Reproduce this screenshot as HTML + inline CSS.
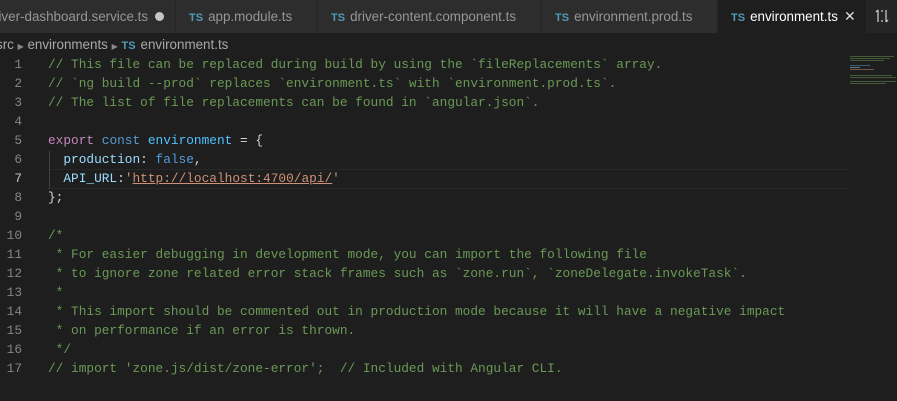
<!DOCTYPE html>
<html><head><style>
body{margin:0;width:897px;height:401px;background:#1e1e1e;overflow:hidden;position:relative;font-family:"Liberation Sans",sans-serif}
.tabs{position:absolute;left:0;top:0;width:897px;height:33px;background:#252526}
.tab{position:absolute;top:0;height:33px;background:#2d2d2d;color:#969696;font-size:13.4px;line-height:33px;white-space:nowrap;overflow:hidden;border-right:1px solid #252526;box-sizing:border-box}
.ts{color:#519aba;font-weight:bold;font-size:11px;margin-right:5px}
.bc{position:absolute;top:34px;left:0;height:22px;line-height:22px;color:#a9a9a9;font-size:13.4px;white-space:nowrap}
.code{position:absolute;left:0;top:57px;font-family:"Liberation Mono",monospace;font-size:12.8px}
.ln{position:absolute;left:0;width:22px;text-align:right;color:#858585}
.l{position:absolute;left:48px;white-space:pre;color:#d4d4d4}
.c{color:#6a9955}.k{color:#c586c0}.b{color:#569cd6}.v{color:#9cdcfe}.s{color:#ce9178}.f{color:#4fc1ff}
</style></head><body>
<div class="tabs">
<div class="tab" style="left:0;width:176px;padding-left:0"><span style="margin-left:-6px">river-dashboard.service.ts</span><span style="position:absolute;left:155px;top:12px;width:9px;height:9px;border-radius:50%;background:#c5c5c5"></span></div>
<div class="tab" style="left:176px;width:142px;padding-left:13px"><span class="ts">TS</span>app.module.ts</div>
<div class="tab" style="left:318px;width:224px;padding-left:13px"><span class="ts">TS</span>driver-content.component.ts</div>
<div class="tab" style="left:542px;width:176px;padding-left:13px"><span class="ts">TS</span>environment.prod.ts</div>
<div class="tab" style="left:718px;width:149px;padding-left:13px;background:#1e1e1e;color:#fff"><span class="ts">TS</span>environment.ts<span style="position:absolute;left:126px;color:#ddd;font-size:14px">✕</span></div>
<svg style="position:absolute;left:874px;top:8px" width="16" height="16" viewBox="0 0 16 16" fill="none" stroke="#c5c5c5" stroke-width="1.3"><path d="M4 2v12M4 2l-2 2M12 14V2M12 14l2-2M7 3h2M7 13h2"/></svg>
</div>
<div class="bc"><span style="margin-left:-4px">src</span> <span style="font-size:8px;color:#888">▶</span> environments <span style="font-size:8px;color:#888">▶</span> <span class="ts">TS</span>environment.ts</div>
<div style="position:absolute;left:48px;top:169px;width:800px;height:18px;border-top:1px solid #282828;border-bottom:1px solid #282828"></div>
<div style="position:absolute;left:49px;top:151px;width:1px;height:38px;background:#404040"></div>
<div class="code">
<div class="ln" style="top:0">1</div><div class="l c" style="top:0">// This file can be replaced during build by using the `fileReplacements` array.</div>
<div class="ln" style="top:19px">2</div><div class="l c" style="top:19px">// `ng build --prod` replaces `environment.ts` with `environment.prod.ts`.</div>
<div class="ln" style="top:38px">3</div><div class="l c" style="top:38px">// The list of file replacements can be found in `angular.json`.</div>
<div class="ln" style="top:57px">4</div>
<div class="ln" style="top:76px">5</div><div class="l" style="top:76px"><span class="k">export</span> <span class="b">const</span> <span class="f">environment</span> = {</div>
<div class="ln" style="top:95px">6</div><div class="l" style="top:95px">  <span class="v">production</span>: <span class="b">false</span>,</div>
<div class="ln" style="top:114px;color:#c6c6c6">7</div><div class="l" style="top:114px">  <span class="v">API_URL</span>:<span class="s">'<span style="text-decoration:underline">http://localhost:4700/api/</span>'</span></div>
<div class="ln" style="top:133px">8</div><div class="l" style="top:133px">};</div>
<div class="ln" style="top:152px">9</div>
<div class="ln" style="top:171px">10</div><div class="l c" style="top:171px">/*</div>
<div class="ln" style="top:190px">11</div><div class="l c" style="top:190px"> * For easier debugging in development mode, you can import the following file</div>
<div class="ln" style="top:209px">12</div><div class="l c" style="top:209px"> * to ignore zone related error stack frames such as `zone.run`, `zoneDelegate.invokeTask`.</div>
<div class="ln" style="top:228px">13</div><div class="l c" style="top:228px"> *</div>
<div class="ln" style="top:247px">14</div><div class="l c" style="top:247px"> * This import should be commented out in production mode because it will have a negative impact</div>
<div class="ln" style="top:266px">15</div><div class="l c" style="top:266px"> * on performance if an error is thrown.</div>
<div class="ln" style="top:285px">16</div><div class="l c" style="top:285px"> */</div>
<div class="ln" style="top:304px">17</div><div class="l c" style="top:304px">// import 'zone.js/dist/zone-error';  // Included with Angular CLI.</div>
</div>
<div style="position:absolute;left:850px;top:55px;width:46px;height:35px;opacity:.5">
<div style="height:1px;background:#6a9955;width:44px;margin-top:1px"></div>
<div style="height:1px;background:#6a9955;width:40px;margin-top:1px"></div>
<div style="height:1px;background:#6a9955;width:34px;margin-top:1px"></div>
<div style="height:1px;background:#569cd6;width:20px;margin-top:4px"></div>
<div style="height:1px;background:#9cdcfe;width:10px;margin-top:1px"></div>
<div style="height:1px;background:#ce9178;width:24px;margin-top:1px"></div>
<div style="height:1px;background:#6a9955;width:42px;margin-top:5px"></div>
<div style="height:1px;background:#6a9955;width:46px;margin-top:1px"></div>
<div style="height:1px;background:#6a9955;width:46px;margin-top:3px"></div>
<div style="height:1px;background:#6a9955;width:36px;margin-top:1px"></div>
</div>
</body></html>
